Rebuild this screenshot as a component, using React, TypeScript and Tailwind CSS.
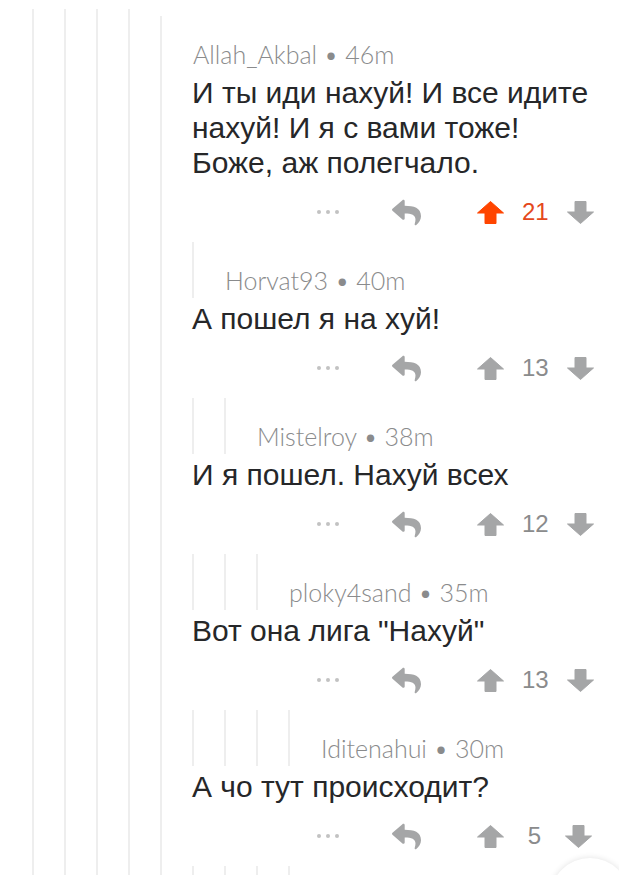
import { FaReply } from 'react-icons/fa';

type Comment = {
  user: string;
  time: string;
  body: string[];
  score: number;
  depth: number;
  upvoted?: boolean;
};

const comments: Comment[] = [
  {
    user: 'Allah_Akbal',
    time: '46m',
    body: ['И ты иди нахуй! И все идите', 'нахуй! И я с вами тоже!', 'Боже, аж полегчало.'],
    score: 21,
    depth: 0,
    upvoted: true,
  },
  { user: 'Horvat93', time: '40m', body: ['А пошел я на хуй!'], score: 13, depth: 1 },
  { user: 'Mistelroy', time: '38m', body: ['И я пошел. Нахуй всех'], score: 12, depth: 2 },
  { user: 'ploky4sand', time: '35m', body: ['Вот она лига "Нахуй"'], score: 13, depth: 3 },
  { user: 'Iditenahui', time: '30m', body: ['А чо тут происходит?'], score: 5, depth: 4 },
];

function Arrow({ up, color }: { up: boolean; color: string }) {
  return (
    <svg width="27" height="23" viewBox="0 0 27 23" className={up ? '' : 'rotate-180'}>
      <path
        d="M13.5 0.5 L26.5 12 L19 12 L19 22.5 L8 22.5 L8 12 L0.5 12 Z"
        fill={color}
        stroke={color}
        strokeWidth="1"
        strokeLinejoin="round"
      />
    </svg>
  );
}

function Actions({ score, upvoted }: { score: number; upvoted?: boolean }) {
  return (
    <div className="mt-[10px] flex h-[44px] items-center">
      <div className="ml-[125px] flex w-[22px] justify-between">
        <span className="h-[4px] w-[4px] rounded-full bg-[#c2c2c2]" />
        <span className="h-[4px] w-[4px] rounded-full bg-[#c2c2c2]" />
        <span className="h-[4px] w-[4px] rounded-full bg-[#c2c2c2]" />
      </div>
      <FaReply className="ml-[53px] text-[#a5a6a7]" size={29} />
      <div className="ml-[56px]">
        <Arrow up color={upvoted ? '#ff4500' : '#a5a6a7'} />
      </div>
      <span
        className={`ml-[18px] min-w-[25px] text-center text-[24px] leading-none font-['Liberation_Sans','Arial',sans-serif] ${
          upvoted ? 'text-[#e4481c]' : 'text-[#8a8b8c]'
        }`}
      >
        {score}
      </span>
      <div className="ml-[18px]">
        <Arrow up={false} color="#a5a6a7" />
      </div>
    </div>
  );
}

function CommentBlock({ c }: { c: Comment }) {
  return (
    <div className="pb-[8px]">
      <div className="flex h-[56px] items-stretch">
        {Array.from({ length: c.depth }).map((_, i) => (
          <div key={i} className="w-[32px] shrink-0 border-l-2 border-[#eeeeee]" />
        ))}
        <div className="flex items-end pb-[4px] pl-[1px] text-[25px] leading-[28px] font-light text-[#8a8b8c] font-['Lato',sans-serif]">
          {c.user} • {c.time}
        </div>
      </div>
      <div className="mt-[3px] text-[30px] leading-[35px] text-[#262729] font-['Liberation_Sans','Arial',sans-serif]">
        {c.body.map((l, i) => (
          <div key={i}>{l}</div>
        ))}
      </div>
      <Actions score={c.score} upvoted={c.upvoted} />
    </div>
  );
}

export default function App() {
  return (
    <div className="relative h-[875px] w-[619px] overflow-hidden bg-white">
      <div className="flex h-full pl-[32px] pt-[9px]">
        <div className="w-[32px] shrink-0 border-l-2 border-[#eeeeee]" />
        <div className="w-[32px] shrink-0 border-l-2 border-[#eeeeee]" />
        <div className="w-[32px] shrink-0 border-l-2 border-[#eeeeee]" />
        <div className="w-[32px] shrink-0 border-l-2 border-[#eeeeee]" />
        <div className="mt-[7px] flex flex-1 border-l-2 border-[#eeeeee]">
          <div className="-ml-[2px] flex-1 pl-[32px]">
            {comments.map((c) => (
              <CommentBlock key={c.user} c={c} />
            ))}
            <div className="flex h-[20px]">
              {Array.from({ length: 4 }).map((_, i) => (
                <div key={i} className="w-[32px] shrink-0 border-l-2 border-[#eeeeee]" />
              ))}
            </div>
          </div>
        </div>
      </div>
      <div className="absolute left-[550px] top-[858px] h-[80px] w-[80px] rounded-full bg-white shadow-[0_0_6px_rgba(0,0,0,0.12)]" />
    </div>
  );
}
